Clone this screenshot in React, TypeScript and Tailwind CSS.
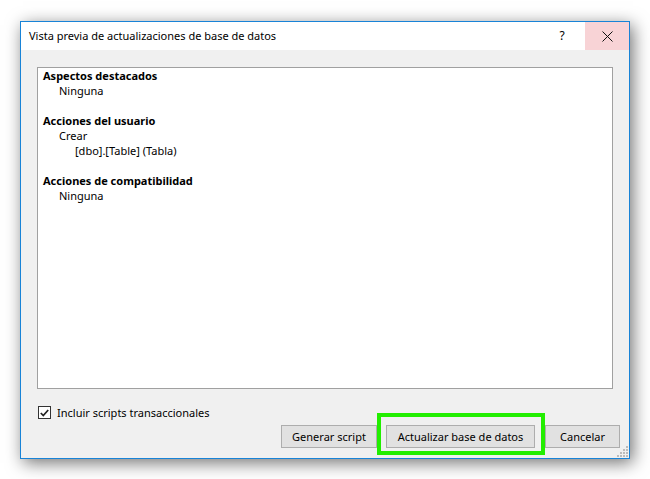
import React from 'react'

const font = "font-['Noto_Sans',sans-serif]"

function Grip() {
  // resize grip dots, bottom-right corner of the dialog
  const dots: [number, number][] = [
    [8, 0], [8, 3], [5, 3], [8, 6], [5, 6], [2, 6], [8, 9], [5, 9], [2, 9], [-1, 9],
  ]
  return (
    <svg width="11" height="11" viewBox="-1 0 11 11" className="absolute right-[1px] bottom-[1px]">
      {dots.map(([x, y], i) => (
        <rect key={i} x={x} y={y} width="2" height="2" fill="#bcbcbc" />
      ))}
    </svg>
  )
}

function WinButton({ children, className = '' }: { children: React.ReactNode; className?: string }) {
  return (
    <button className={`h-[23px] border border-[#adadad] bg-[#e1e1e1] text-[11px] text-black leading-none ${className}`}>
      {children}
    </button>
  )
}

export default function App() {
  return (
    <div className={`w-[650px] h-[479px] bg-white pl-[20px] pt-[21px] ${font}`}>
      <div className="relative w-[610px] h-[438px] border border-[#1883d7] flex flex-col overflow-hidden shadow-[3px_4px_16px_rgba(0,0,0,0.55)]">
        {/* title bar */}
        <div className="h-[28px] bg-white flex items-center shrink-0">
          <span className="pl-[8px] text-[11px] text-black flex-1">Vista previa de actualizaciones de base de datos</span>
          <span className="w-[46px] text-center text-[12px] text-black">?</span>
          <div className="w-[44px] h-full bg-[#f8d3d6] flex items-center justify-center">
            <svg width="11" height="11" viewBox="0 0 11 11">
              <path d="M0.5 0.5 L10.5 10.5 M10.5 0.5 L0.5 10.5" stroke="#111" strokeWidth="1" />
            </svg>
          </div>
        </div>

        {/* body */}
        <div className="flex-1 bg-[#f0f0f0] flex flex-col px-[16px] pt-[17px]">
          <div className="h-[322px] shrink-0 bg-white border border-[#a0a0a0] pl-[5px] text-[11px] leading-[15px] text-black">
            <div className="font-bold">Aspectos destacados</div>
            <div className="pl-[16px]">Ninguna</div>
            <div className="h-[15px]" />
            <div className="font-bold">Acciones del usuario</div>
            <div className="pl-[16px]">Crear</div>
            <div className="pl-[32px]">[dbo].[Table] (Tabla)</div>
            <div className="h-[15px]" />
            <div className="font-bold">Acciones de compatibilidad</div>
            <div className="pl-[16px]">Ninguna</div>
          </div>

          <label className="mt-[17px] h-[13px] flex items-center gap-[6px] pl-[1px] text-[11px] leading-[13px] text-black">
            <span className="w-[13px] h-[13px] border border-[#333] bg-white flex items-center justify-center">
              <svg width="9" height="8" viewBox="0 0 9 8">
                <path d="M0.8 4 L3.3 6.6 L8.2 1" stroke="#222" strokeWidth="1.7" fill="none" />
              </svg>
            </span>
            Incluir scripts transaccionales
          </label>

          <div className="mt-[-6px] flex justify-end items-end mr-[-7px]">
            <WinButton className="w-[96px] mb-[7px]">Generar script</WinButton>
            <div className="border-[4px] border-[#22ee00] pl-[5px] pr-[6px] pt-[6px] pb-[3px]">
              <WinButton className="w-[149px]">Actualizar base de datos</WinButton>
            </div>
            <WinButton className="w-[75px] mb-[7px]">Cancelar</WinButton>
          </div>
        </div>
        <Grip />
      </div>
    </div>
  )
}
